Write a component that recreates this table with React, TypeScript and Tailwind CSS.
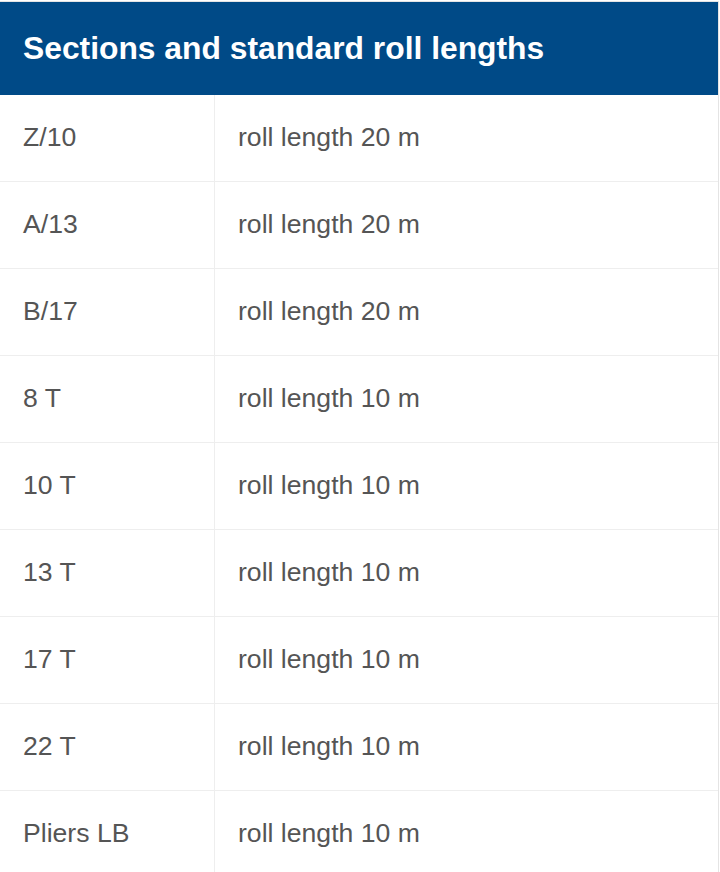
const rows = [
  { section: 'Z/10', length: 'roll length 20 m' },
  { section: 'A/13', length: 'roll length 20 m' },
  { section: 'B/17', length: 'roll length 20 m' },
  { section: '8 T', length: 'roll length 10 m' },
  { section: '10 T', length: 'roll length 10 m' },
  { section: '13 T', length: 'roll length 10 m' },
  { section: '17 T', length: 'roll length 10 m' },
  { section: '22 T', length: 'roll length 10 m' },
  { section: 'Pliers LB', length: 'roll length 10 m' },
];

const App = () => {
  return (
    <div className="min-h-[872px] bg-white font-['Liberation_Sans',Arial,sans-serif]">
      <div className="mt-px w-[719px] border-t border-r border-[#e4e4e4]">
        <div className="flex h-[93px] items-center bg-[#004a87] px-[23px]">
          <h2 className="text-[31.8px] font-bold leading-none text-white">Sections and standard roll lengths</h2>
        </div>
        {rows.map((row) => (
          <div key={row.section} className="flex h-[87px] border-b border-[#eeeeee]">
            <div className="flex w-[215px] items-center border-r border-[#eeeeee] px-[23px] text-[26.6px] text-[#555555]">
              {row.section}
            </div>
            <div className="flex flex-1 items-center px-[23px] text-[26.6px] text-[#555555]">
              {row.length}
            </div>
          </div>
        ))}
      </div>
    </div>
  );
};

export default App;
